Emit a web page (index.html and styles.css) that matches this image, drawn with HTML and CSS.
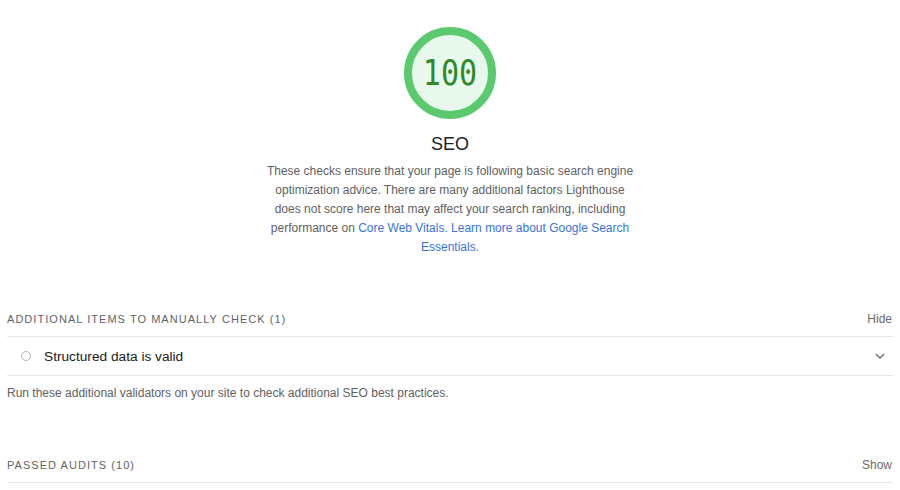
FILE: index.html
```html
<!DOCTYPE html>
<html>
<head>
<meta charset="utf-8">
<link rel="stylesheet" href="styles.css">
</head>
<body>
<div class="category-header">
  <div class="gauge">
    <svg class="gauge-ring" viewBox="0 0 92 92" width="92" height="92">
      <circle cx="46" cy="46" r="42" fill="#e8f8ec" stroke="#5bca6f" stroke-width="8"/>
    </svg>
    <span class="gauge-value">100</span>
  </div>
  <div class="gauge-label">SEO</div>
  <p class="description">These checks ensure that your page is following basic search engine optimization advice. There are many additional factors Lighthouse does not score here that may affect your search ranking, including performance on <a href="#">Core Web Vitals. Learn more about Google Search Essentials.</a></p>
</div>

<section class="group manual">
  <div class="group-header">
    <span class="group-title">Additional items to manually check (1)</span>
    <span class="toggle">Hide</span>
  </div>
  <div class="audit">
    <span class="audit-icon"></span>
    <span class="audit-title">Structured data is valid</span>
    <svg class="chevron" viewBox="0 0 10 6" width="10" height="6">
      <path d="M1 1 L5 5 L9 1" fill="none" stroke="#6b6b6b" stroke-width="1.4"/>
    </svg>
  </div>
  <p class="group-desc">Run these additional validators on your site to check additional SEO best practices.</p>
</section>

<section class="group passed">
  <div class="group-header">
    <span class="group-title">Passed audits (10)</span>
    <span class="toggle">Show</span>
  </div>
</section>
</body>
</html>
```

FILE: styles.css
```css
html, body {
  margin: 0;
  padding: 0;
  background: #ffffff;
}

body {
  font-family: "Liberation Sans", Arial, sans-serif;
  color: #212121;
}

.category-header {
  display: flex;
  flex-direction: column;
  align-items: center;
  padding-top: 27px;
}

.gauge {
  position: relative;
  width: 92px;
  height: 92px;
}

.gauge-ring {
  display: block;
}

.gauge-value {
  position: absolute;
  inset: 0;
  display: flex;
  align-items: center;
  justify-content: center;
  font-family: "DejaVu Sans Mono", "Liberation Mono", monospace;
  font-size: 35px;
  color: #2f8a27;
  transform: scaleX(0.86);
  padding-bottom: 1px;
}

.gauge-label {
  margin-top: 14px;
  font-size: 18px;
  line-height: 22px;
  color: #202124;
}

.description {
  margin: 7px 0 0;
  max-width: 372px;
  text-align: center;
  font-size: 12px;
  line-height: 19px;
  color: #616161;
}

.description a {
  color: #3b72d9;
  text-decoration: none;
}

.group {
  margin: 0 7px;
}

.manual {
  margin-top: 54px;
}

.passed {
  margin-top: 56px;
}

.group-header {
  display: flex;
  justify-content: space-between;
  align-items: center;
  padding-bottom: 9px;
  border-bottom: 1px solid #e6e6e6;
  line-height: 16px;
}

.group-title {
  font-size: 11px;
  text-transform: uppercase;
  letter-spacing: 0.095em;
  color: #5f6368;
}

.toggle {
  font-size: 12px;
  color: #6b6b6b;
  margin-right: 1px;
}

.audit {
  display: flex;
  align-items: center;
  height: 38px;
  border-bottom: 1px solid #e6e6e6;
  padding-left: 14px;
}

.audit-icon {
  width: 8px;
  height: 8px;
  border: 1.5px solid #b3b3b3;
  border-radius: 50%;
  margin-right: 13px;
}

.audit-title {
  flex: 1;
  font-size: 13.7px;
  color: #212121;
}

.chevron {
  margin-right: 8px;
}

.group-desc {
  margin: 9px 0 0;
  font-size: 12px;
  line-height: 16px;
  color: #616161;
}
```
